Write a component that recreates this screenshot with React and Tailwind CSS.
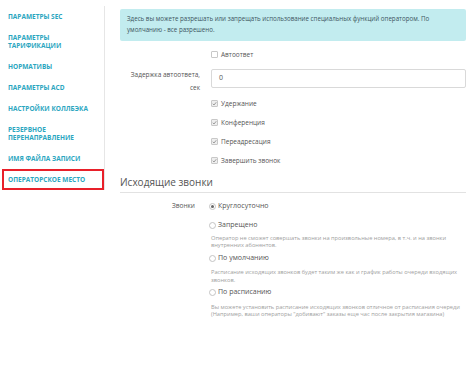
import React from "react";

const teal = "text-[#2ba6bf]";

function SideItem({ children, active }) {
  if (active) {
    return (
      <div className={`ml-[2px] h-[21px] flex items-center border-2 border-[#e8202a] pl-[4px] font-bold text-[6.5px] leading-[8px] uppercase ${teal}`}>
        {children}
      </div>
    );
  }
  return (
    <div className={`pl-[8px] py-[6.5px] font-bold text-[6.5px] leading-[8px] uppercase ${teal}`}>
      {children}
    </div>
  );
}

function Check({ checked, label }) {
  return (
    <div className="flex items-center gap-[3px]">
      <span className={`w-[7px] h-[7px] border border-[#c8c8c8] rounded-[1px] flex items-center justify-center ${checked ? "bg-[#eeeeee]" : "bg-white"}`}>
        {checked && (
          <svg width="5" height="5" viewBox="0 0 10 10">
            <path d="M1.5 5.5 L4 8 L8.5 2.5" fill="none" stroke="#888" strokeWidth="1.6" />
          </svg>
        )}
      </span>
      <span className="text-[6.5px] text-[#555]">{label}</span>
    </div>
  );
}

function Radio({ checked, label }) {
  return (
    <div className="flex items-center gap-[2px] -ml-[2px]">
      <span className="w-[7px] h-[7px] rounded-full border border-[#c4c4c4] bg-white flex items-center justify-center">
        {checked && <span className="w-[3px] h-[3px] rounded-full bg-[#666]" />}
      </span>
      <span className="text-[7px] text-[#555]">{label}</span>
    </div>
  );
}

export default function App() {
  return (
    <div className="w-[470px] h-[370px] bg-white flex" style={{ fontFamily: '"Open Sans", "Noto Sans", sans-serif' }}>
      <div className="w-[105px] shrink-0 self-start mt-[6px] border-r border-[#e6e6e6]">
        <SideItem>Параметры SEC</SideItem>
        <SideItem>Параметры<br />тарификации</SideItem>
        <SideItem>Нормативы</SideItem>
        <SideItem>Параметры ACD</SideItem>
        <SideItem>Настройки коллбэка</SideItem>
        <SideItem>Резервное<br />перенаправление</SideItem>
        <SideItem>Имя файла записи</SideItem>
        <SideItem active>Операторское место</SideItem>
      </div>

      <div className="flex-1 pl-[15px] pr-[4px] pt-[9px]">
        <div className="h-[32px] bg-[#c2ecef] rounded-[2px] px-[7px] pt-[4px] text-[6.2px] leading-[11px] text-[#3d5560]">
          Здесь вы можете разрешать или запрещать использование специальных функций оператором. По умолчанию - все разрешено.
        </div>

        <div className="grid grid-cols-[80px_1fr] gap-x-[11px]">
          <div className="h-[27px]" />
          <div className="h-[27px] flex items-center">
            <Check label="Автоответ" />
          </div>

          <div className="text-right text-[6.5px] leading-[13px] text-[#555]">
            Задержка автоответа,<br />сек
          </div>
          <div className="pt-[1px]">
            <div className="h-[19px] border border-[#d9d9d9] rounded-[2px] flex items-center px-[7px] text-[7px] text-[#555]">0</div>
          </div>

          <div />
          <div>
            <div className="h-[19px] flex items-center"><Check checked label="Удержание" /></div>
            <div className="h-[19px] flex items-center"><Check checked label="Конференция" /></div>
            <div className="h-[19px] flex items-center"><Check checked label="Переадресация" /></div>
            <div className="h-[19px] flex items-center"><Check checked label="Завершить звонок" /></div>
          </div>
        </div>

        <div className="border-b border-[#e2e2e2] h-[23px] flex items-end pb-[2px] text-[10px] leading-[15px] text-[#555]">
          Исходящие звонки
        </div>

        <div className="grid grid-cols-[75px_1fr] gap-x-[16px] pt-[3.5px]">
          <div className="h-[19px] flex items-center justify-end text-[6.5px] text-[#555]">Звонки</div>
          <div>
            <div className="h-[19px] flex items-center"><Radio checked label="Круглосуточно" /></div>
            <div className="h-[19px] flex items-center"><Radio label="Запрещено" /></div>
            <div className="text-[5.7px] leading-[7px] text-[#a0a0a0] pb-[1px] whitespace-nowrap">
              Оператор не сможет совершать звонки на произвольные номера, в т.ч. и на звонки<br />внутренних абонентов.
            </div>
            <div className="h-[17px] flex items-center"><Radio label="По умолчанию" /></div>
            <div className="text-[5.7px] leading-[8px] text-[#a0a0a0] pt-[1.5px] whitespace-nowrap">
              Расписание исходящих звонков будет таким же как и график работы очереди входящих<br />звонков.
            </div>
            <div className="h-[17px] flex items-center"><Radio label="По расписанию" /></div>
            <div className="text-[5.7px] leading-[7px] text-[#a0a0a0] pt-[3px] whitespace-nowrap">
              Вы можете установить расписание исходящих звонков отличное от расписания очереди<br />(Например, ваши операторы "добивают" заказы еще час после закрытия магазина)
            </div>
          </div>
        </div>
      </div>
    </div>
  );
}
